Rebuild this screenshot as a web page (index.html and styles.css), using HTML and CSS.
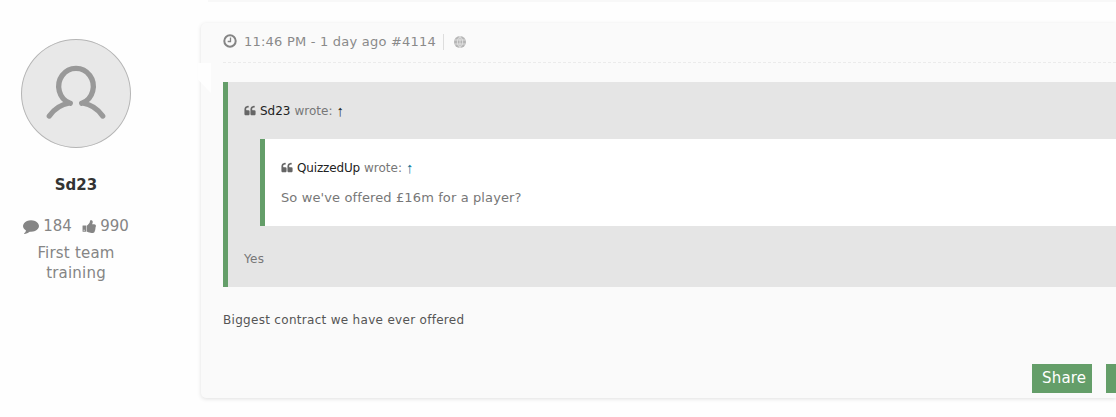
FILE: index.html
```
<!DOCTYPE html>
<html lang="en">
<head>
    <meta charset="UTF-8">
    <title>Forum post</title>
    <link rel="stylesheet" href="styles.css">
</head>
<body>
<svg class="sprite">
    <symbol id="quote" viewBox="0 0 1792 1792">
        <path d="M832 960v384q0 80-56 136t-136 56h-384q-80 0-136-56t-56-136v-704q0-104 40.5-198.5t109.5-163.5 163.5-109.5 198.5-40.5h64q26 0 45 19t19 45v128q0 26-19 45t-45 19h-64q-106 0-181 75t-75 181v32q0 40 28 68t68 28h224q80 0 136 56t56 136zm896 0v384q0 80-56 136t-136 56h-384q-80 0-136-56t-56-136v-704q0-104 40.5-198.5t109.5-163.5 163.5-109.5 198.5-40.5h64q26 0 45 19t19 45v128q0 26-19 45t-45 19h-64q-106 0-181 75t-75 181v32q0 40 28 68t68 28h224q80 0 136 56t56 136z"/>
    </symbol>
</svg>
<div class="previousPost"></div>
<div class="post">
    <div class="profile">
        <div class="avatar">
            <svg width="60" height="56" viewBox="0 0 60 56">
                <path d="M3.300 51Q11 40 23.500 38A17.300 18 0 1 1 36.500 38Q49 40 56.700 51M23 37.800L24.300 38.200M37 37.800L35.700 38.200" />
            </svg>
        </div>
        <div class="username">Sd23</div>
        <div class="stats">
            <svg class="comment" viewBox="0 0 1792 1792"><path d="M1792 896q0 174-120 321.500t-326 233-450 85.500q-70 0-145-8-198 175-460 242-49 14-114 22-17 2-30.500-9t-17.500-29v-1q-3-4-.5-12t2-10 4.500-9.500l6-9 7-8.500 8-9q7-8 31-34.500t34.500-38 31-39.500 32.500-51 27-59 26-76q-157-89-247.500-220t-90.500-281q0-174 120-321.500t326-233 450-85.500 450 85.500 326 233 120 321.500z"/></svg>
            <span>184</span>
            <svg class="thumb" viewBox="0 0 1792 1792"><path d="M320 1344q0-26-19-45t-45-19q-27 0-45.500 19t-18.500 45q0 27 18.500 45.500t45.500 18.500q26 0 45-18.500t19-45.500zm160-512v640q0 26-19 45t-45 19h-288q-26 0-45-19t-19-45v-640q0-26 19-45t45-19h288q26 0 45 19t19 45zm1184 0q0 86-55 149 15 44 15 76 3 76-43 137 17 56 0 117-15 57-54 94 9 112-49 181-64 76-197 78h-129q-66 0-144-15.500t-121.500-29-120.500-39.500q-123-43-158-44-26-1-45-19.500t-19-44.500v-641q0-25 18-43.500t43-20.500q24-2 76-59t101-121q68-87 101-120 18-18 31-48t17.500-48.500 13.500-60.500q7-39 12.500-61t19.500-52 34-50q19-19 45-19 46 0 82.500 10.500t60 26 40 40.500 24 45 12 50 5 45 .5 39q0 38-9.500 76t-19 60-27.500 56q-3 6-10 18t-11 22-8 24h277q78 0 135 57t57 135z"/></svg>
            <span>990</span>
        </div>
        <div class="rank">First team<br>training</div>
    </div>

    <div class="card">
        <div class="arrow"></div>
        <div class="postHeader">
            <svg class="clock" viewBox="0 0 14 14"><circle cx="7" cy="7" r="5.700"/><path d="M7.500 3.500v4H4.700"/></svg>
            <span class="time">11:46 PM - 1 day ago #4114</span>
            <svg class="globe" viewBox="0 0 12 12"><circle class="disc" cx="6" cy="6" r="6"/><path d="M6 0v12M.5 4h11M.5 8h11M6 .5C2.500 3 2.500 9 6 11.500M6 .5C9.500 3 9.500 9 6 11.500"/></svg>
        </div>

        <div class="quote">
            <div class="cite"><svg class="quoteIcon"><use href="#quote"/></svg><a>Sd23</a> <span>wrote:</span> <a class="up">↑</a></div>
            <div class="quote inner">
                <div class="cite"><svg class="quoteIcon"><use href="#quote"/></svg><a class="longName">QuizzedUp</a> <span>wrote:</span> <a class="up blue">↑</a></div>
                <p class="question">So we've offered £16m for a player?</p>
            </div>
            <p class="reply">Yes</p>
        </div>

        <p class="message">Biggest contract we have ever offered</p>

        <div class="buttons">
            <a class="button">Share</a>
            <a class="button"></a>
        </div>
    </div>
</div>
</body>
</html>
```
FILE: styles.css
```
* {
    box-sizing: border-box;
}
body {
    margin: 0;
    height: 417px;
    overflow: hidden;
    background-color: #fefefe;
    font-family: Verdana, "DejaVu Sans", sans-serif;
    font-size: 12px;
    color: #777;
}
p {
    margin: 0;
}
.sprite {
    display: none;
}
.previousPost {
    height: 2px;
    margin-left: 208px;
    background-color: #f8f8f8;
}
.post {
    display: flex;
    margin-top: 21px;
}

/* left column */
.profile {
    width: 152px;
    padding-top: 16px;
    text-align: center;
    color: #858585;
    font-size: 15px;
}
.avatar {
    display: flex;
    justify-content: center;
    width: 110px;
    height: 109px;
    margin-left: 21px;
    padding-top: 25px;
    border: 1px solid #b5b5b5;
    border-radius: 50%;
    background-color: #e8e8e8;
}
.avatar svg {
    overflow: visible;
}
.avatar path {
    fill: none;
    stroke: #999;
    stroke-width: 5.3;
    stroke-linecap: round;
    stroke-linejoin: round;
}
.username {
    margin-top: 27px;
    line-height: 20px;
    font-weight: bold;
    font-size: 15px;
    color: #333;
}
.stats {
    display: flex;
    align-items: center;
    height: 20px;
    margin: 21px 0 0 23px;
}
.stats span {
    width: 29px;
    white-space: nowrap;
}
.stats svg {
    flex: none;
    fill: #858585;
}
.comment {
    width: 16px;
    height: 16px;
    margin-right: 4px;
}
.thumb {
    width: 15px;
    height: 15px;
    margin: 0 3px 0 10px;
}
.rank {
    margin-top: 7px;
    line-height: 20px;
    font-size: 15px;
    letter-spacing: 0.2px;
}

/* post body */
.card {
    position: relative;
    flex: 1;
    height: 375px;
    margin-left: 49px;
    padding-left: 22px;
    background-color: #fafafa;
    border-radius: 5px 0 0 5px;
    box-shadow: 0 1px 4px rgba(0, 0, 0, 0.12);
}
.arrow {
    position: absolute;
    left: -3px;
    top: 40px;
    width: 13px;
    height: 30px;
    background-color: #fefefe;
    clip-path: polygon(0 0, 100% 0, 100% 100%, 0 55%);
}
.postHeader {
    display: flex;
    align-items: center;
    height: 40px;
    padding-bottom: 1px;
    border-bottom: 1px dashed #ebebeb;
}
.clock {
    width: 14px;
    height: 14px;
    margin-top: -2px;
    fill: none;
    stroke: #858585;
    stroke-width: 2;
}
.clock path {
    stroke-width: 1.300;
}
.time {
    width: 200px;
    margin-left: 7px;
    border-right: 1px solid #ddd;
    line-height: 16px;
    font-size: 13px;
    letter-spacing: 0.22px;
    white-space: nowrap;
    color: #8a8a8a;
}
.globe {
    width: 12px;
    height: 12px;
    margin: -1px 0 0 10px;
    fill: none;
    stroke: #eee;
    stroke-width: 0.7;
}
.globe .disc {
    fill: #b5b5b5;
    stroke: none;
}
.quote {
    height: 205px;
    margin-top: 19px;
    padding: 19px 0 0 16px;
    border-left: 5px solid #649e69;
    background-color: #e5e5e5;
}
.quote.inner {
    height: 87px;
    margin: 19px 0 0 16px;
    background-color: #fff;
}
.cite {
    display: flex;
    align-items: center;
    height: 19px;
}
.cite a {
    margin-right: 4px;
    color: #222;
}
.cite span {
    margin-right: 4px;
}
.cite .longName {
    letter-spacing: -0.15px;
}
.cite .up {
    font-family: "Liberation Sans", sans-serif;
    font-size: 15px;
}
.cite .blue {
    color: #087295;
}
.quoteIcon {
    width: 12px;
    height: 12px;
    margin-right: 4px;
    fill: #666;
}
.question {
    margin-top: 11px;
    line-height: 19px;
    font-size: 13px;
    letter-spacing: 0.12px;
}
.reply {
    margin-top: 24px;
    line-height: 19px;
    letter-spacing: 0.3px;
}
.message {
    margin-top: 23px;
    line-height: 20px;
    letter-spacing: 0.3px;
    color: #555;
}
.buttons {
    display: flex;
    justify-content: flex-end;
    margin-top: 34px;
}
.button {
    height: 29px;
    width: 10px;
    background-color: #649e69;
    color: #fff;
    font-size: 15px;
    line-height: 28px;
    letter-spacing: 0.2px;
}
.button:first-child {
    width: 60px;
    margin-right: 14px;
    padding-left: 10px;
}
```
